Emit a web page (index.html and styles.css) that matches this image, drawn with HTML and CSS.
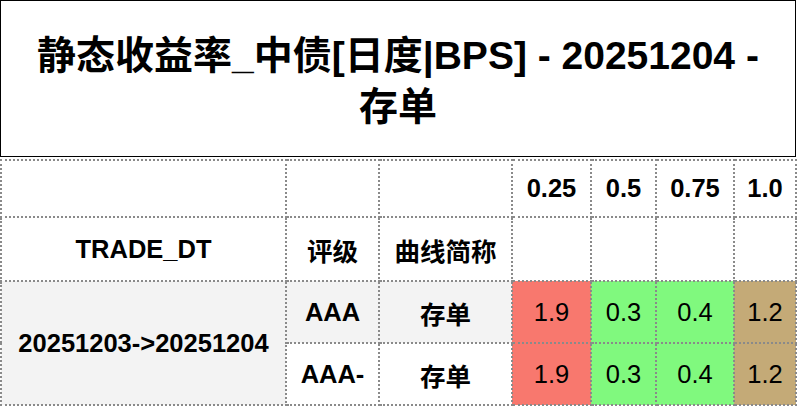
FILE: index.html
```html
<!DOCTYPE html>
<html>
<head>
<meta charset="utf-8">
<link rel="stylesheet" href="styles.css">
</head>
<body>
<div class="title">静态收益率_中债[日度|BPS] - 20251204 - 存单</div>
<table class="grid">
  <colgroup>
    <col class="c-date"><col class="c-rate"><col class="c-curve">
    <col class="c-t1"><col class="c-t2"><col class="c-t3"><col class="c-t4">
  </colgroup>
  <tr class="r-h1">
    <th></th><th></th><th></th>
    <th>0.25</th><th>0.5</th><th>0.75</th><th>1.0</th>
  </tr>
  <tr class="r-h2">
    <th>TRADE_DT</th><th>评级</th><th>曲线简称</th>
    <th></th><th></th><th></th><th></th>
  </tr>
  <tr class="r-d shade">
    <th rowspan="2" class="shade">20251203-&gt;20251204</th>
    <th>AAA</th><th>存单</th>
    <td class="red">1.9</td><td class="green">0.3</td><td class="green">0.4</td><td class="tan">1.2</td>
  </tr>
  <tr class="r-d">
    <th>AAA-</th><th>存单</th>
    <td class="red">1.9</td><td class="green">0.3</td><td class="green">0.4</td><td class="tan">1.2</td>
  </tr>
</table>
</body>
</html>
```
FILE: styles.css
```css
html, body {
  margin: 0;
  padding: 0;
  background: #ffffff;
}
body {
  font-family: "Liberation Sans", "Noto Sans CJK SC", sans-serif;
  color: #000;
}
.title {
  box-sizing: border-box;
  width: 796px;
  height: 157px;
  border: 1px solid #000;
  padding: 29px 30px 0;
  font-size: 39px;
  line-height: 51px;
  font-weight: bold;
  text-align: center;
}
.grid {
  margin-top: 2px;
  border-collapse: collapse;
  table-layout: fixed;
  width: 796px;
  font-size: 25.5px;
}
.c-date { width: 285px; }
.c-rate { width: 93px; }
.c-curve { width: 133px; }
.c-t1 { width: 79px; }
.c-t2 { width: 65px; }
.c-t3 { width: 78px; }
.c-t4 { width: 62px; }
.grid th, .grid td {
  border: 2px dotted #8a8a8a;
  padding: 0;
  text-align: center;
  vertical-align: middle;
  white-space: nowrap;
}
.grid th { font-weight: bold; }
.grid td { font-weight: normal; }
.r-h1 { height: 57px; }
.r-h2 { height: 64px; }
.r-d { height: 62px; }
.shade th, th.shade { background: #f3f3f3; }
.red { background: #f8786e; }
.green { background: #80f97e; }
.tan { background: #c4aa77; }
```
